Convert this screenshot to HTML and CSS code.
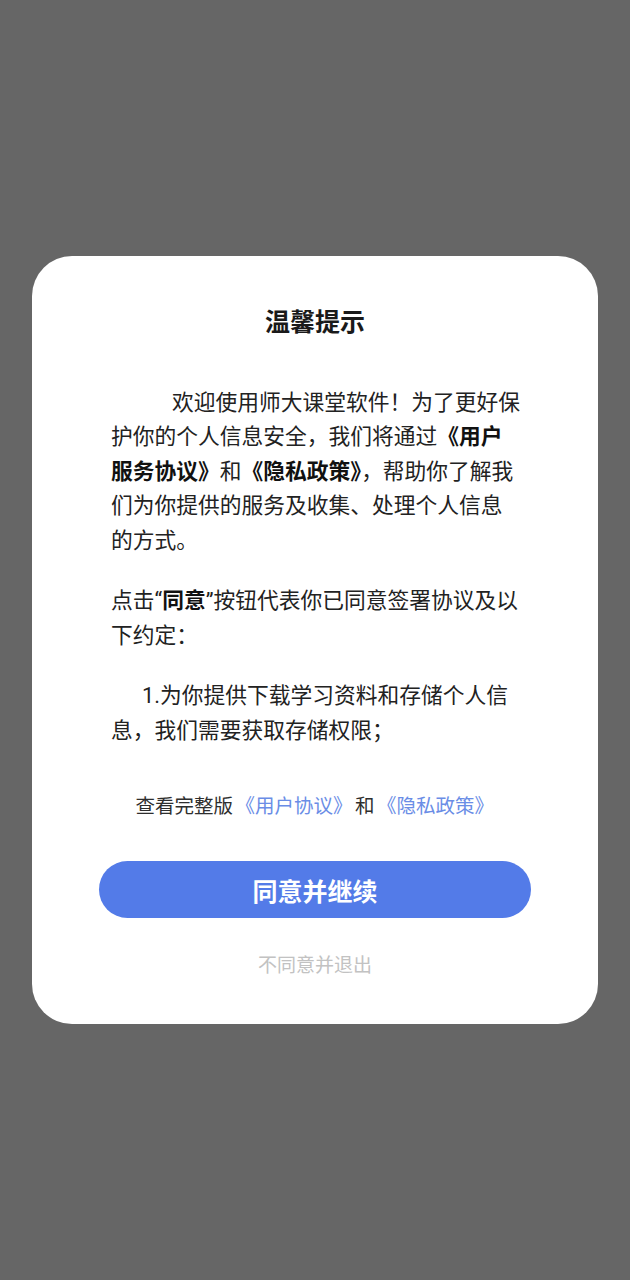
FILE: index.html
```html
<!DOCTYPE html>
<html lang="zh-CN">
<head>
<meta charset="utf-8">
<title>温馨提示</title>
<link rel="stylesheet" href="styles.css">
</head>
<body>
<div class="overlay">
  <div class="dialog">
    <h1 class="title">温馨提示</h1>
    <div class="content">
      <p class="para indent-lg">欢迎使用师大课堂软件！为了更好保护你的个人信息安全，我们将通过<b>《用户服务协议》</b>和<b>《隐私政策》</b>，帮助你了解我们为你提供的服务及收集、处理个人信息的方式。</p>
      <p class="para">点击“<b>同意</b>”按钮代表你已同意签署协议及以下约定：</p>
      <p class="para indent-sm">1.为你提供下载学习资料和存储个人信息，我们需要获取存储权限；</p>
    </div>
    <p class="links">查看完整版<a class="link" href="#">《用户协议》</a>和<a class="link" href="#">《隐私政策》</a></p>
    <button class="btn-agree" type="button">同意并继续</button>
    <button class="btn-reject" type="button">不同意并退出</button>
  </div>
</div>
</body>
</html>
```

FILE: styles.css
```css
html, body {
  margin: 0;
  padding: 0;
}
body {
  background: #666666;
  font-family: Roboto, "Noto Sans CJK SC", sans-serif;
}
.overlay {
  height: 100vh;
  display: flex;
  align-items: center;
  justify-content: center;
  padding: 0 32px;
}
.dialog {
  width: 566px;
  box-sizing: border-box;
  background: #ffffff;
  border-radius: 40px;
  padding: 50px 0 43px;
  display: flex;
  flex-direction: column;
  align-items: center;
}
.title {
  margin: 0;
  font-size: 25px;
  line-height: 34px;
  font-weight: 700;
  color: #1a1a1a;
}
.content {
  align-self: stretch;
  padding: 0 76px 0 79px;
  margin-top: 46px;
}
.para {
  margin: 0 0 26px;
  font-size: 21.75px;
  line-height: 34.5px;
  color: #222222;
}
.para:last-child {
  margin-bottom: 0;
}
.para b {
  font-weight: 700;
  color: #111111;
}
.indent-lg {
  text-indent: 61px;
}
.indent-sm {
  text-indent: 31px;
}
.links {
  margin: 44px 0 0;
  font-size: 19.5px;
  line-height: 30px;
  color: #2e2e2e;
  padding-left: 2px;
}
.link {
  color: #6a8de6;
  text-decoration: none;
  padding: 0 2.5px;
}
.btn-agree {
  margin-top: 39px;
  width: 432px;
  height: 57px;
  border: none;
  border-radius: 29px;
  background: #537be8;
  color: #ffffff;
  font-family: inherit;
  font-size: 25px;
  font-weight: 700;
  padding: 0;
}
.btn-reject {
  margin-top: 33px;
  border: none;
  background: none;
  padding: 0;
  font-family: inherit;
  font-size: 19px;
  line-height: 30px;
  color: #c2c2c2;
}
```
